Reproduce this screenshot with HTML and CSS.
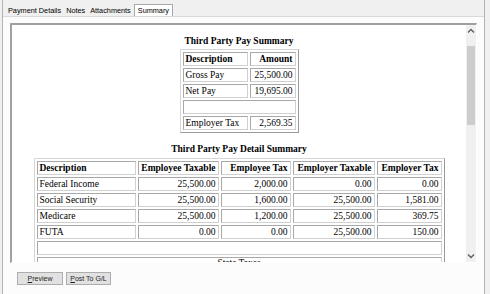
FILE: index.html
```html
<!DOCTYPE html>
<html lang="en">
<head>
    <meta charset="UTF-8">
    <title>Third Party Pay Summary</title>
    <link rel="stylesheet" href="styles.css">
</head>
<body>
<div class="window">
    <div class="tabs">
        <span class="tab">Payment Details</span>
        <span class="tab">Notes</span>
        <span class="tab">Attachments</span>
        <span class="tab active">Summary</span>
    </div>

    <div class="page">
        <div class="viewer">
            <div class="doc">
                <h3 class="title">Third Party Pay Summary</h3>
                <table class="grid small">
                    <tr><th class="left">Description</th><th class="num">Amount</th></tr>
                    <tr><td>Gross Pay</td><td class="num">25,500.00</td></tr>
                    <tr><td>Net Pay</td><td class="num">19,695.00</td></tr>
                    <tr><td colspan="2">&nbsp;</td></tr>
                    <tr><td>Employer Tax</td><td class="num">2,569.35</td></tr>
                </table>

                <h3 class="title detail-title">Third Party Pay Detail Summary</h3>
                <table class="grid detail">
                    <tr>
                        <th class="left c1">Description</th>
                        <th class="c2">Employee Taxable</th>
                        <th class="c3">Employee Tax</th>
                        <th class="c4">Employer Taxable</th>
                        <th class="c5">Employer Tax</th>
                    </tr>
                    <tr><td>Federal Income</td><td class="num">25,500.00</td><td class="num">2,000.00</td><td class="num">0.00</td><td class="num">0.00</td></tr>
                    <tr><td>Social Security</td><td class="num">25,500.00</td><td class="num">1,600.00</td><td class="num">25,500.00</td><td class="num">1,581.00</td></tr>
                    <tr><td>Medicare</td><td class="num">25,500.00</td><td class="num">1,200.00</td><td class="num">25,500.00</td><td class="num">369.75</td></tr>
                    <tr><td>FUTA</td><td class="num">0.00</td><td class="num">0.00</td><td class="num">25,500.00</td><td class="num">150.00</td></tr>
                    <tr><td colspan="5">&nbsp;</td></tr>
                    <tr><td colspan="5" class="state">State Taxes</td></tr>
                </table>
            </div>

            <div class="scrollbar">
                <svg class="arrow" width="10" height="12" viewBox="0 0 10 12"><path d="M2 7.5 L5 4.5 L8 7.5" fill="none" stroke="#606060" stroke-width="1.4"/></svg>
                <div class="track"><div class="thumb"></div></div>
                <svg class="arrow" width="10" height="12" viewBox="0 0 10 12"><path d="M2 4.5 L5 7.5 L8 4.5" fill="none" stroke="#606060" stroke-width="1.4"/></svg>
            </div>
        </div>

        <div class="actions">
            <button class="btn"><u>P</u>review</button>
            <button class="btn"><u>P</u>ost To G/L</button>
        </div>
    </div>
</div>
</body>
</html>
```

FILE: styles.css
```css
body {
    margin: 0;
    background-color: #f0f0f0;
    font-family: "Liberation Sans", Arial, sans-serif;
}
.window {
    margin-left: 2px;
    width: 481px;
    height: 294px;
    border-left: 1px solid #b4b4b4;
    border-right: 1px solid #b4b4b4;
}

/* tab strip */
.tabs {
    display: flex;
    align-items: flex-end;
    height: 16px;
    padding-left: 3px;
    box-sizing: border-box;
}
.tab {
    font-size: 7.3px;
    color: #000;
    padding: 0 2px;
    margin-right: 1px;
    height: 11px;
    line-height: 11px;
}
.tab.active {
    background-color: #fff;
    border: 1px solid #a8a8a8;
    border-bottom: none;
    padding: 0 3px;
}

.page {
    background-color: #fcfcfc;
    border-top: 1px solid #dadada;
    height: 277px;
}

/* report viewer */
.viewer {
    display: flex;
    margin: 6px 7px 0 7px;
    height: 237px;
    border-top: 2px solid #a0a0a0;
    border-left: 2px solid #a0a0a0;
    border-right: 1px solid #fff;
    border-bottom: 1px solid #fff;
    background-color: #fff;
}
.doc {
    flex: 1;
    overflow: hidden;
    padding-top: 10px;
    font-family: "Liberation Serif", "Times New Roman", serif;
    font-size: 9.5px;
    color: #000;
}
.title {
    margin: 0 0 2px;
    font-size: 9.5px;
    line-height: 12px;
    text-align: center;
}
.detail-title {
    margin-top: 10px;
    margin-bottom: 3px;
}

.grid {
    margin: 0 auto;
    border-collapse: separate;
    border-spacing: 2px;
    border: 1px solid #9a9a9a;
    border-top-color: #d6d6d6;
    border-left-color: #d6d6d6;
}
.grid th,
.grid td {
    border: 1px solid #d0d0d0;
    border-top-color: #a8a8a8;
    border-left-color: #a8a8a8;
    padding: 0 2px;
    line-height: 12px;
    text-align: right;
    white-space: nowrap;
    box-sizing: border-box;
}
.grid td {
    text-align: left;
}
.grid th.left {
    text-align: left;
}
.grid td.num {
    text-align: right;
}
.small th:first-child { width: 65px; }
.small th:last-child { width: 46px; }

.detail .c1 { width: 99px; }
.detail .c2 { width: 81px; }
.detail .c3 { width: 70px; }
.detail .c4 { width: 82px; }
.detail .c5 { width: 65px; }
.grid td.state {
    text-align: center;
    line-height: 10px;
}

/* scrollbar */
.scrollbar {
    width: 10px;
    display: flex;
    flex-direction: column;
    background-color: #f0f0f0;
}
.arrow {
    display: block;
    height: 12px;
}
.track {
    flex: 1;
    padding: 9px 1px 0;
}
.thumb {
    height: 79px;
    background-color: #cdcdcd;
}

/* buttons */
.actions {
    display: flex;
    gap: 3px;
    padding: 9px 0 0 14px;
}
.btn {
    font-family: "Liberation Sans", Arial, sans-serif;
    font-size: 7px;
    color: #1e1e1e;
    width: 46px;
    height: 13px;
    padding: 0;
    background-color: #e1e1e1;
    border: 1px solid #adadad;
}
.btn + .btn {
    width: 45px;
}
```
